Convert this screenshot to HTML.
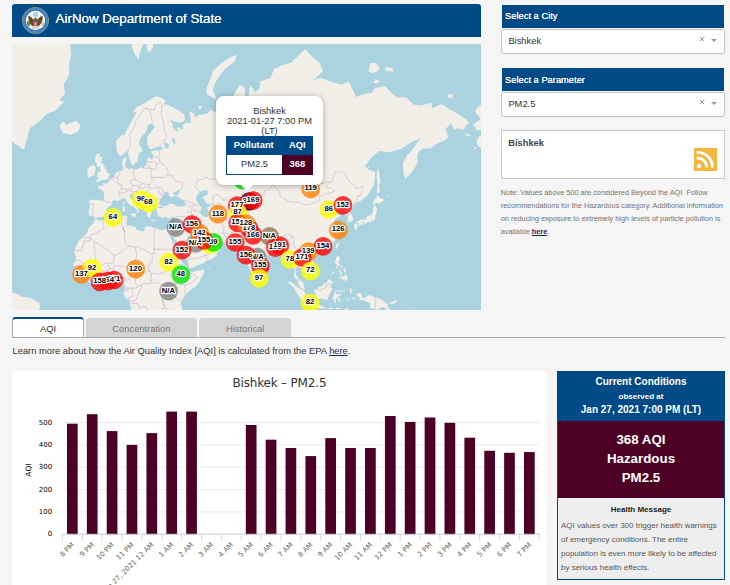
<!DOCTYPE html>
<html lang="en"><head><meta charset="utf-8"><title>AirNow Department of State</title>
<style>
*{box-sizing:border-box}
html,body{margin:0;padding:0}
body{width:730px;height:585px;overflow:hidden;background:#f5f5f5;font-family:"Liberation Sans",Arial,sans-serif;color:#333;position:relative}
.abs{position:absolute}
#hdr{left:12px;top:4px;width:469px;height:33px;background:#004b87;border-radius:3px 3px 0 0}
#hdr .t{position:absolute;left:43.6px;top:0;line-height:29px;font-size:13.33px;color:#fff;white-space:nowrap;text-shadow:0 0 .6px #fff}
#map{left:12px;top:44px;width:469px;height:266px;overflow:hidden;background:#aad3df}

.bar{left:501.5px;width:222.6px;height:23px;background:#004b87;color:#fff;font-size:9.33px;line-height:24px;padding-left:3.6px;white-space:nowrap;text-shadow:0 0 .5px #fff}
.sel{left:501px;width:224px;height:24.6px;background:#fff;border:1px solid #c4c4c4;border-radius:3px;font-size:9.33px;line-height:23.4px;padding-left:6.4px;color:#333}
.sel .x{position:absolute;left:197px;top:6.3px;width:6px;height:6px}
.sel .c{position:absolute;left:208.8px;top:8.8px;width:0;height:0;border-left:3px solid transparent;border-right:3px solid transparent;border-top:3.2px solid #999}
#city{left:501px;top:130.3px;width:224px;height:49.2px;background:#fff;border:1px solid #c9c9c9}
#city b{position:absolute;left:6.2px;top:5.6px;font-size:9.33px;letter-spacing:0;color:#444;line-height:12px}
#note{left:500.8px;top:186.1px;width:226px;font-size:7.33px;line-height:13.03px;color:#747474;white-space:nowrap}
#note b{color:#1b2a5a;text-decoration:underline}
.tab{top:318px;height:19px;background:#d4d4d4;border-radius:3.5px 3.5px 0 0;font-size:9.33px;color:#777;text-align:center;line-height:23px}
#tabA{left:12px;top:317px;width:72px;height:20px;background:#fff;border:1px solid #aaa;border-top:2px solid #004b87;border-bottom:0;border-radius:3.5px 3.5px 0 0;color:#333;line-height:20px}
#tline{left:12px;top:336.8px;width:713px;height:1px;background:#a9a9a9}
#learn{left:12.5px;top:345px;font-size:9.33px;line-height:12px;white-space:nowrap;color:#333}
#learn u{color:#1b2a5a;font-weight:normal}
#chart{left:12px;top:371px;width:534px;height:214px;background:#fff;overflow:hidden}
#cc{left:557px;top:370.8px;width:168px;height:209px;border:1px solid #004b87;border-top:0;background:#eee}
#cc .h{position:absolute;left:-1px;top:0;width:168px;height:50.2px;background:#004b87;color:#fff;text-align:center;font-weight:bold}
#cc .h div{position:absolute;left:0;width:100%;white-space:nowrap}
#cc .m{position:absolute;left:0;top:50.2px;width:166px;height:76.7px;background:#4c0026;color:#fff;text-align:center;font-weight:bold;font-size:13.33px}
#cc .m div{position:absolute;left:0;width:100%;line-height:16px}
#cc .hm{position:absolute;left:0;top:134px;width:166px;text-align:center;font-weight:bold;font-size:8px;line-height:10px;color:#222}
#cc .tx{position:absolute;left:3px;top:148.6px;font-size:8px;line-height:14px;color:#555;white-space:nowrap}
</style></head><body>
<div id="hdr" class="abs"><svg class="abs" style="left:10px;top:2.9px" width="27" height="27" viewBox="0 0 27 27">
<circle cx="13.5" cy="13.5" r="13.1" fill="#3573b9" stroke="#b9ba62" stroke-width=".7"/>
<circle cx="13.5" cy="13.5" r="11.3" fill="none" stroke="#6f9fd4" stroke-width="1.6" stroke-dasharray="1.1 .9" opacity=".75"/>
<circle cx="13.5" cy="13.5" r="9.7" fill="#fdfdfd"/>
<circle cx="13.5" cy="7.4" r="2.7" fill="#a9d3e6"/>
<path d="M7.6 7.3l1.6 1.5M19.4 7.3l-1.6 1.5" stroke="#c9c25e" stroke-width="1"/>
<path d="M6.5 8.8C8.3 9.2 10 10.6 11.2 12.6L12.4 11.6 13.5 10.6 14.6 11.6 15.8 12.6C17 10.6 18.7 9.2 20.5 8.8 21.1 11.6 20.3 15.6 17.3 18.6L15.6 19.4H11.400000000000001L9.7 18.600000000000001C6.7 15.6 5.9 11.6 6.5 8.8Z" fill="#68481f"/>
<path d="M10.3 19h6.4l1 2.4-2.300000000000001.6-1.9.5-1.9-.5-2.3-.6z" fill="#d9d9d6"/>
<path d="M11.7 13.6h3.6v3.3c0 1.2-.8 2-1.8 2.4-1-.4-1.8-1.2-1.8-2.400000000000001z" fill="#ee7d84"/>
<path d="M11.7 13.4h3.6v1.8h-3.6z" fill="#3b5ea8"/>
<path d="M12.5 12.4a1.1 1.1 0 0 1 2 0l-.3 1h-1.4z" fill="#7a5a2a"/>
<ellipse cx="6.5" cy="16.600000000000001" rx="1.5" ry="2.6" transform="rotate(-20 6.5 16.6)" fill="#3f8f45"/>
<ellipse cx="20.400000000000002" cy="16.8" rx="1.2" ry="2.3" transform="rotate(20 20.4 16.8)" fill="#c4c4c0"/>
</svg><div class="t">AirNow Department of State</div></div>
<div id="map" class="abs"><svg width="469" height="266" viewBox="0 0 469 266" style="position:absolute;left:0;top:0"><rect width="469" height="266" fill="#aad3df"/><path d="M117.9 275.3L120.4 271.9L120.8 268.8L119.3 265.5L117.9 259.8L117.0 257.3L113.2 253.1L111.3 249.6L112.4 247.5L113.2 244.5L112.8 241.1L110.7 239.9L107.8 240.1L105.9 240.1L104.0 237.8L101.0 236.1L97.5 236.5L94.5 237.2L90.7 239.1L86.9 238.6L83.1 238.8L80.2 239.9L75.4 237.2L72.6 235.1L69.3 232.2L68.4 230.1L65.9 227.2L62.7 224.7L62.7 222.3L61.1 220.0L63.1 217.4L64.0 213.4L63.1 210.6L62.1 207.8L62.1 206.7L64.2 201.8L66.9 196.7L69.9 192.9L73.3 190.9L76.0 187.4L75.8 185.0L80.0 180.2L81.5 179.3L83.3 175.1L84.4 174.9L86.9 176.5L88.8 176.3L90.7 176.8L93.4 175.1L97.0 173.5L100.2 172.8L104.0 172.5L107.8 172.3L113.2 171.6L115.5 172.3L114.7 173.7L114.9 175.1L115.1 177.7L113.8 179.6L115.8 181.2L119.7 181.8L123.5 183.0L125.0 185.7L130.7 187.7L132.8 186.1L132.6 183.6L135.9 181.8L138.5 182.5L142.2 184.1L146.0 185.0L149.8 186.3L151.5 185.7L153.6 185.0L156.1 185.4L158.5 185.9L159.7 185.4L161.2 182.1L162.7 178.2L162.7 175.6L162.7 174.0L163.3 172.5L161.8 173.3L160.4 172.8L157.4 174.4L156.4 174.4L153.0 172.5L151.3 174.2L148.2 173.0L146.5 172.3L144.8 168.9L145.6 167.2L144.2 166.2L144.4 165.0L145.4 164.0L144.2 163.5L142.2 162.7L141.0 162.7L140.1 163.5L139.9 165.0L138.1 163.5L138.1 166.0L138.9 167.2L140.2 169.9L138.3 170.1L138.9 171.3L138.1 173.7L136.2 173.0L134.9 170.4L135.5 169.2L134.0 167.7L132.6 165.7L131.5 163.7L131.7 161.2L130.9 159.9L129.0 158.4L125.4 156.0L123.5 154.5L122.1 152.1L121.8 151.2L121.0 152.6L120.4 150.7L120.2 150.2L118.1 151.0L117.9 153.4L120.2 155.8L121.6 158.9L125.2 160.2L126.7 162.2L129.8 164.7L129.2 165.5L126.9 164.0L126.1 166.0L127.1 167.5L124.8 169.9L124.4 170.1L124.2 169.4L125.4 167.7L124.2 165.0L122.7 163.5L121.6 163.0L119.3 161.7L117.6 160.2L115.8 158.9L114.5 157.4L114.1 156.0L113.2 154.5L111.5 153.7L109.2 155.3L107.1 156.6L105.7 157.1L104.0 156.6L102.1 156.3L100.4 157.1L100.6 158.9L98.7 161.5L96.0 163.2L93.9 166.2L94.9 168.2L93.0 170.9L90.3 173.0L86.1 173.0L83.8 174.7L82.5 173.5L81.2 171.8L77.5 172.3L76.6 168.2L77.5 164.5L77.9 162.0L76.8 157.6L79.4 155.5L83.6 156.0L87.3 156.3L91.1 156.6L92.2 153.1L92.2 150.2L92.2 148.8L89.7 145.7L86.3 144.3L85.4 142.6L88.8 141.7L91.5 142.0L90.9 138.8L94.1 139.7L94.7 139.4L97.4 137.6L97.9 135.2L100.8 134.0L102.3 131.9L103.6 128.7L105.9 127.5L109.7 126.8L111.3 125.9L110.5 122.6L109.9 120.6L110.7 115.1L114.7 113.0L114.1 117.2L113.2 120.6L113.4 122.9L115.1 124.6L117.6 125.2L120.2 123.9L121.8 125.9L125.0 124.9L129.4 122.9L130.1 124.2L132.0 124.2L132.6 122.6L134.7 119.9L134.5 117.2L135.7 114.0L137.6 113.0L139.3 115.4L140.4 115.4L141.0 112.6L141.2 110.4L139.3 109.3L139.3 107.1L141.8 106.8L145.0 106.4L147.9 106.8L149.8 104.9L152.3 104.9L149.8 103.7L148.8 102.2L145.0 103.0L142.2 104.1L138.3 105.2L136.8 103.0L135.3 100.2L135.1 96.6L135.7 92.1L138.3 89.1L141.2 85.1L142.9 83.8L141.4 80.6L139.3 80.1L137.0 80.1L135.5 82.4L134.9 85.1L133.2 89.1L130.7 91.2L128.6 94.2L127.3 97.8L127.3 101.8L129.8 103.7L130.5 107.1L126.9 109.3L126.3 111.9L125.9 115.4L125.0 118.2L122.7 118.9L121.6 120.9L119.3 120.9L118.7 118.9L118.1 115.8L117.2 113.0L115.7 108.6L114.7 107.1L114.9 104.9L113.6 108.2L109.7 111.5L107.8 111.9L105.2 108.6L104.4 103.0L104.2 97.0L106.1 94.6L110.7 90.8L113.6 90.4L113.0 89.1L115.5 84.2L118.5 79.2L121.9 72.9L125.0 67.4L121.2 68.4L119.3 69.9L122.3 66.3L125.2 62.6L130.5 60.5L135.5 57.1L139.7 54.8L143.7 52.5L147.9 53.1L153.8 56.5L151.7 59.9L155.5 60.5L158.4 62.6L161.4 63.2L167.9 67.4L172.6 71.0L173.0 75.9L168.8 78.7L163.1 77.8L158.4 75.9L156.3 73.9L160.3 79.2L160.8 83.8L164.1 86.9L166.9 88.7L164.6 84.2L165.0 83.3L171.7 85.6L170.4 81.5L174.6 78.3L178.4 79.2L178.9 75.4L177.0 66.9L182.2 69.4L183.1 73.4L186.9 71.0L195.5 69.4L198.4 65.8L204.1 67.9L209.8 64.8L210.2 60.5L216.5 63.2L223.2 66.9L225.1 64.2L221.8 58.8L222.2 50.1L227.9 40.7L232.7 43.9L233.3 53.1L232.9 64.2L231.7 74.4L230.8 76.8L234.6 75.4L235.5 66.9L235.5 56.0L237.4 47.1L238.4 41.4L243.2 48.3L247.9 43.9L247.9 37.4L258.4 34.0L262.2 24.7L271.8 20.8L279.4 18.5L287.0 11.1L293.3 5.0L298.4 11.1L308.0 19.3L310.8 26.9L304.2 34.0L297.5 37.4L308.0 34.0L319.4 37.4L328.9 40.7L336.6 37.4L341.3 47.1L344.2 53.1L351.8 50.1L359.4 48.9L363.2 43.9L372.8 42.0L380.4 50.1L386.1 53.7L393.7 53.1L401.4 60.5L409.0 61.5L419.5 58.8L420.4 64.2L430.0 59.9L437.6 65.3L447.1 70.5L453.8 74.9L457.0 78.7L454.7 81.1L450.9 86.0L446.2 84.2L442.0 85.6L440.1 81.1L438.2 79.2L435.7 82.9L433.4 85.1L434.7 87.4L436.2 93.3L433.8 95.8L423.3 100.6L418.5 104.5L410.9 104.5L406.1 108.2L405.2 112.6L405.6 118.2L403.3 122.9L399.5 128.7L393.2 134.9L391.5 128.7L390.9 118.9L394.7 111.9L401.4 104.5L406.1 97.4L409.0 94.6L400.4 97.4L389.9 104.5L382.3 107.1L376.6 108.2L367.1 107.1L359.4 113.7L352.8 122.3L356.6 125.5L363.2 127.8L362.9 133.4L361.9 140.9L358.5 146.6L355.1 152.1L349.0 156.8L346.1 157.6L343.6 159.2L341.7 161.2L338.1 165.2L337.5 167.2L339.6 169.9L341.3 174.7L340.6 176.8L337.5 178.2L335.2 178.4L335.8 174.7L335.8 171.1L332.8 170.4L333.1 168.2L331.8 165.7L327.0 167.5L326.1 167.7L327.0 163.7L325.5 162.7L322.5 165.2L319.0 167.5L320.4 169.9L321.3 171.1L325.1 170.6L328.2 171.3L327.8 172.5L323.8 174.7L321.9 177.5L324.7 181.6L326.8 184.5L326.1 186.5L324.7 187.9L327.0 188.3L325.7 192.7L322.6 197.0L319.8 200.1L316.9 202.6L312.2 204.7L308.0 205.7L305.1 206.3L304.2 208.8L303.2 206.3L300.9 206.1L298.1 207.8L296.0 211.4L297.5 214.4L300.7 217.2L302.6 221.3L302.8 225.3L299.4 228.2L297.3 230.5L294.2 231.8L294.6 229.1L293.3 228.4L290.8 227.2L288.9 224.3L286.6 222.5L285.7 222.3L285.1 224.3L284.1 227.2L284.0 230.7L285.5 232.4L286.2 234.9L289.1 236.5L291.4 238.8L291.6 241.1L292.7 244.5L292.9 245.8L291.8 245.8L288.5 243.5L287.6 242.6L286.2 240.3L285.7 238.0L285.3 235.9L282.1 233.0L282.2 230.1L282.6 227.2L281.9 223.3L280.7 219.4L280.3 216.4L277.9 215.8L276.0 217.8L274.2 217.4L274.6 214.4L273.1 211.4L271.6 209.2L269.9 206.3L269.5 204.7L267.0 204.3L265.1 205.7L262.2 206.1L260.3 206.3L259.8 208.8L258.0 209.8L254.8 212.8L253.3 214.0L249.5 216.8L248.7 217.8L247.2 219.4L247.6 223.1L246.6 227.2L246.8 228.6L245.1 230.5L242.2 232.8L239.9 230.1L239.7 229.1L237.8 225.3L237.1 223.5L235.2 218.6L234.2 215.4L233.3 211.4L233.3 208.0L232.7 205.9L232.5 204.7L229.8 207.3L229.6 208.0L226.0 204.9L228.5 203.4L226.4 203.7L224.7 202.0L222.2 199.5L220.9 198.2L217.4 198.6L213.2 198.9L210.0 198.4L205.0 197.8L203.1 195.7L201.8 194.6L199.1 195.7L193.6 193.1L191.3 190.7L189.4 188.3L186.9 187.4L186.9 188.5L185.8 189.6L187.3 192.7L190.0 195.9L190.9 198.4L192.7 197.2L192.3 196.7L192.8 199.7L194.6 200.7L198.2 200.1L199.9 198.4L202.0 196.3L202.0 199.1L204.1 201.2L206.2 202.0L208.5 204.3L206.8 207.3L205.0 208.6L204.7 211.4L202.0 213.4L198.9 215.4L194.6 216.4L191.7 219.0L188.1 220.4L184.1 222.3L180.3 223.7L177.4 224.1L177.0 222.7L176.3 219.8L175.9 216.4L174.2 213.8L172.6 210.4L169.2 206.3L166.9 201.2L164.1 196.5L161.2 192.7L161.2 189.4L159.9 193.1L156.4 188.5L158.2 192.7L158.9 194.4L161.0 199.1L162.4 203.2L164.8 205.3L165.4 210.2L167.9 213.4L169.8 218.2L172.3 220.4L175.9 223.3L176.6 226.0L179.3 228.2L185.0 226.6L188.8 226.2L192.1 225.5L192.1 228.4L189.8 233.0L187.3 237.8L183.7 242.6L180.8 244.5L175.9 248.3L173.6 251.5L170.9 254.4L170.2 256.1L168.5 259.8L169.4 261.3L170.0 265.5L171.5 268.4L171.9 272.3L172.1 275.3ZM-3.8 240.7L-1.8 244.5L-0.8 246.4L-0.8 248.3L3.0 249.6L5.9 250.2L10.1 252.7L14.8 253.6L18.3 253.8L21.1 255.4L25.9 258.0L27.0 258.2L28.2 261.9L28.0 263.6L25.9 267.5L24.0 269.4L21.1 273.3L18.3 287.2L-19.9 287.2L-19.9 238.8ZM83.6 137.6L86.5 134.3L88.4 133.7L84.8 133.1L85.9 129.1L85.7 127.8L88.8 127.5L88.4 124.9L87.6 122.6L85.0 122.9L85.0 119.6L82.9 117.2L83.3 113.3L85.0 109.7L88.6 109.7L86.9 113.0L90.7 113.0L89.2 117.5L88.4 118.9L90.7 119.6L93.2 123.9L94.7 126.8L95.1 129.1L97.2 129.1L97.7 130.3L96.8 132.5L95.8 133.7L97.2 134.0L96.2 135.2L92.6 135.8L89.9 136.1L87.6 137.0L85.0 137.9ZM76.0 133.4L75.1 131.3L75.6 127.8L75.4 124.9L79.3 121.6L82.7 121.6L84.0 124.2L82.9 127.8L82.3 131.3L78.7 132.5ZM58.3 90.8L51.2 89.1L48.8 84.7L47.8 81.5L51.6 77.3L54.5 81.1L59.2 78.7L64.0 76.8L68.6 81.5L66.9 86.5L63.1 89.1ZM10.8 105.2L6.8 101.8L3.0 100.6L-0.2 96.6L-4.0 87.4L-10.3 58.8L-10.3 -42.2L62.1 -42.2L62.1 -17.7L58.3 0.4L59.2 11.1L57.3 19.3L57.3 30.5L51.6 40.7L52.9 50.1L46.9 56.0L52.0 57.7L43.0 66.9L35.4 69.4L26.8 77.8L22.8 81.1L18.3 83.8L15.4 92.5L13.3 100.6L12.5 104.5ZM126.3 15.3L123.1 11.1L121.2 6.8L119.8 2.3L119.3 -0.5L115.5 -17.7L131.7 -17.7L131.3 -0.5L129.8 4.1L128.0 7.7L127.5 11.1ZM134.5 -0.5L134.5 -17.7L142.2 -17.7L141.2 -0.5L140.8 3.2L138.3 7.7L137.4 8.5L135.1 5.9ZM204.1 55.4L194.6 50.1L194.6 43.9L197.4 37.4L201.2 26.9L208.9 19.3L220.3 11.9L225.1 11.1L222.2 17.7L212.7 25.4L206.0 34.0L202.2 40.7L200.9 47.1L204.1 54.2ZM356.6 26.9L358.5 18.5L364.2 19.3L368.0 24.7L363.2 28.4L359.4 29.1ZM373.7 26.9L372.8 23.1L380.4 23.9L381.4 27.6ZM361.3 38.8L363.2 35.4L367.6 36.8L366.1 39.4ZM435.3 53.7L436.6 50.1L441.4 50.7L440.4 53.7ZM365.2 149.6L367.8 147.7L366.9 140.9L368.8 137.9L368.0 134.9L367.4 130.3L366.5 124.6L365.0 127.2L364.6 131.9L365.3 137.9L365.5 143.7L365.0 147.4ZM361.3 161.2L361.0 158.4L362.1 156.6L364.6 153.4L365.0 150.7L368.0 153.9L371.3 154.7L372.2 156.6L369.5 157.6L367.4 159.9L364.6 158.4L363.1 159.2L362.7 160.5ZM363.6 161.5L364.4 163.7L365.2 166.2L364.2 169.2L363.2 172.3L362.9 175.4L361.1 177.0L360.6 176.3L359.2 177.9L355.6 177.9L355.4 178.6L353.3 180.5L352.0 178.6L352.2 177.7L349.0 178.4L346.1 179.3L344.2 179.3L344.8 178.4L347.4 176.1L350.5 175.6L353.3 175.4L354.7 173.5L356.0 171.3L356.0 172.3L358.9 171.1L359.8 169.9L361.1 167.5L361.0 165.0L361.5 163.0L362.1 162.0ZM344.0 179.6L342.9 180.2L341.7 181.2L341.9 182.3L342.7 183.4L342.9 185.7L343.6 186.1L344.8 185.2L345.9 182.3L345.5 180.5ZM349.9 178.6L351.2 179.8L350.3 180.9L349.0 180.5L347.6 182.1L346.7 180.7L347.6 179.3L349.0 178.9ZM326.3 198.4L326.8 200.1L325.7 203.2L324.7 205.3L323.6 203.9L324.0 201.2L325.1 199.1ZM305.1 209.2L306.1 210.4L303.8 212.8L301.7 212.4L301.9 210.4L303.4 209.4ZM324.7 212.2L327.4 212.4L328.0 215.4L326.5 217.4L326.5 219.8L328.0 221.3L330.5 221.7L331.0 223.9L329.5 223.3L328.0 221.9L325.1 221.9L324.4 220.4L323.2 218.4L323.0 216.6L323.8 215.8L324.2 213.4ZM333.7 229.5L335.4 233.0L335.0 235.9L333.5 237.6L332.9 236.7L333.9 234.9L331.2 236.8L330.8 234.9L328.9 233.6L327.0 235.1L327.6 233.0L329.7 231.8L331.2 232.6L332.8 231.1ZM331.4 224.3L333.3 224.3L334.1 227.0L333.1 228.8L332.2 228.6L331.6 226.6ZM329.3 227.2L330.1 228.2L329.3 230.9L328.0 230.1L328.4 228.2ZM327.0 225.5L329.1 226.4L327.4 228.2L326.8 228.2ZM324.0 222.3L325.9 222.5L325.9 224.7L324.9 224.7ZM322.1 226.4L322.8 228.2L318.6 231.8L317.9 232.2L319.4 230.1L321.7 227.2ZM317.1 234.9L315.8 236.8L314.1 238.8L311.8 239.7L309.9 242.6L306.8 243.0L304.7 245.3L303.4 244.7L302.1 246.6L302.6 248.3L304.2 251.2L304.7 254.0L307.6 254.8L310.8 254.8L312.9 256.1L315.4 255.5L316.5 253.1L317.1 250.8L318.5 248.3L319.2 246.6L321.1 246.2L319.2 244.1L318.3 242.0L319.2 240.3L320.4 238.9L321.7 238.2L319.6 237.0L317.9 235.3ZM276.1 237.6L280.3 238.4L282.4 240.7L285.7 243.0L288.5 245.1L292.2 247.3L293.5 250.2L296.3 252.7L296.7 255.0L296.2 259.6L293.9 258.8L289.5 255.9L286.6 252.1L285.9 250.2L283.6 247.3L282.8 245.1L279.2 241.2L276.5 239.3ZM296.5 259.6L298.1 259.8L300.9 260.1L302.1 261.3L304.9 261.5L305.9 260.5L309.1 261.5L311.8 263.0L312.7 264.9L308.9 264.2L305.1 263.6L302.3 263.0L299.4 263.2L297.5 261.7L295.2 261.3ZM312.7 263.8L315.0 264.0L314.1 265.1ZM315.6 264.2L316.9 264.2L316.5 265.3L315.4 265.1ZM317.1 264.0L319.4 263.8L321.3 264.4L320.9 265.3L317.5 265.5ZM323.0 264.2L326.1 263.8L328.9 264.0L328.6 265.1L324.2 265.3ZM321.3 266.3L324.7 266.7L324.2 268.0L321.5 267.1ZM337.1 264.2L335.6 265.5L329.9 268.2L330.8 266.7L334.3 264.6ZM332.9 245.6L330.8 246.6L327.0 246.8L324.7 246.4L323.2 247.3L322.8 248.3L322.1 250.2L321.1 253.1L321.1 255.0L322.3 255.9L322.1 258.8L324.0 259.0L324.0 256.9L323.8 254.0L325.1 253.4L326.1 255.9L326.7 257.5L328.4 256.9L328.2 258.8L328.7 255.9L327.6 254.4L326.1 252.1L328.0 251.7L329.5 250.2L329.7 249.8L327.0 250.0L325.1 250.8L323.6 249.6L324.2 247.5L326.1 247.3L328.9 247.5L331.4 247.5L332.8 246.4ZM338.3 244.1L339.8 245.4L339.8 247.3L339.0 249.8L337.9 248.9L337.7 246.8L337.5 245.8ZM338.8 253.6L341.3 253.8L343.8 254.8L343.8 255.5L339.8 254.8ZM334.8 254.2L336.8 254.2L336.6 255.5L335.0 255.4ZM344.6 250.0L347.0 249.1L349.0 249.6L349.9 252.7L351.8 254.6L353.7 253.1L355.6 251.5L358.5 251.2L361.3 252.7L363.2 253.3L367.1 254.6L370.3 255.9L372.4 258.2L375.6 259.8L376.2 261.1L375.1 262.6L377.2 264.6L379.4 266.5L381.7 268.0L380.4 268.6L377.5 267.8L374.9 266.5L372.4 263.6L369.9 263.0L367.6 264.6L366.1 265.9L363.2 265.7L359.4 264.0L357.1 264.2L358.7 261.7L357.5 258.8L354.7 257.5L350.9 256.3L348.0 255.9L347.0 254.0L348.4 253.1L346.1 252.5L344.2 251.2ZM377.4 258.8L383.3 256.3L384.8 256.5L384.2 258.8L380.4 260.3L378.5 260.1ZM381.9 253.3L384.2 254.8L386.1 257.3L385.5 256.5L382.9 254.4ZM389.4 258.6L390.3 260.1L391.6 261.3L390.3 260.7ZM392.8 261.1L394.7 262.4L394.3 262.8ZM397.0 262.6L399.1 264.6L397.9 264.2ZM398.7 266.1L400.6 266.7L400.4 267.3L398.9 266.9ZM400.8 264.4L401.9 266.1L402.1 266.7L400.8 265.1ZM247.0 229.5L249.3 232.0L250.4 234.9L247.9 236.8L247.2 236.8L246.6 234.9L246.6 232.0ZM124.2 169.4L123.7 172.3L123.3 173.0L120.2 172.1L118.3 170.4L119.8 169.4ZM112.2 162.0L113.0 165.0L112.6 167.2L110.9 167.7L110.5 165.0L110.1 162.7ZM112.4 157.4L112.6 159.9L112.0 161.5L110.9 159.9L111.3 158.4ZM139.5 175.6L144.6 176.3L142.2 177.0L139.3 176.5ZM160.3 175.6L159.1 176.8L157.4 177.9L156.1 176.8L157.4 176.3ZM100.4 165.2L100.8 166.5L99.5 166.5L99.1 165.7ZM196.3 223.9L198.4 224.1L197.4 224.7L196.1 224.5ZM63.6 191.4L62.7 192.7L62.3 192.0ZM65.0 192.2L64.8 193.1L64.4 192.7ZM68.8 190.1L67.2 192.5L68.2 191.2ZM186.6 61.5L190.2 62.6L189.0 65.3L186.9 65.3ZM453.4 89.1L458.9 91.2L457.0 92.5L453.8 91.2ZM464.3 64.8L463.3 67.9L468.5 74.4L467.1 76.4L462.7 79.2L460.3 81.1L463.3 82.4L463.9 86.0L473.8 86.0L473.8 90.4L467.1 92.5L464.3 97.4L466.2 102.6L471.9 105.2L479.5 108.2L485.2 47.1ZM463.3 103.0L464.8 104.5L463.7 105.2L461.8 104.5ZM378.1 150.7L375.6 152.1L374.7 153.4L375.8 153.1ZM373.3 153.7L371.8 155.3L372.8 154.7ZM381.4 148.8L379.8 150.2L380.8 149.9ZM392.4 135.5L390.7 137.3L391.6 137.6ZM356.6 121.6L357.9 122.9L356.6 123.3ZM407.7 107.5L406.3 110.1L407.1 109.3Z" fill="#f2efe9"/><path d="M149.8 162.5L154.3 161.7L158.0 159.9L161.4 159.9L163.7 161.7L166.9 162.5L170.2 162.5L173.6 161.2L173.8 159.4L172.6 157.4L170.2 155.8L166.5 153.1L164.3 151.5L162.0 152.1L159.3 153.7L158.2 153.1L156.4 151.2L157.4 149.3L155.5 148.8L154.5 147.7L153.0 148.0L151.1 150.7L149.2 154.2L147.9 156.8L146.9 158.7L147.9 160.2L149.0 161.7ZM164.3 151.2L162.2 151.0L161.2 149.1L163.1 147.4L166.2 146.3L168.8 146.0L167.5 147.4L166.9 149.3L165.8 151.0ZM145.4 164.0L146.9 162.5L149.8 162.5L151.3 163.2L149.6 164.0L146.9 164.0ZM186.9 149.3L188.8 147.4L192.7 146.3L195.5 146.8L195.9 150.7L192.7 152.1L190.4 153.1L192.1 155.8L194.6 158.7L194.6 160.7L195.5 162.5L195.5 165.0L196.9 167.5L197.4 171.1L195.5 172.8L192.7 173.0L189.8 171.3L187.7 168.9L188.3 166.7L189.4 164.2L190.4 164.0L188.3 162.5L186.6 159.9L185.0 157.4L184.1 153.9L185.0 151.2ZM195.3 160.2L198.0 161.0L198.6 162.5L196.7 163.2L195.3 162.0ZM152.3 98.2L156.4 99.8L156.8 103.3L154.0 104.9L152.6 102.2ZM160.8 93.3L162.7 95.4L163.7 98.6L162.2 101.0L161.2 98.2L159.9 95.8ZM155.9 247.7L159.1 247.5L159.5 250.2L158.9 252.7L155.5 253.3L154.9 250.2ZM150.2 254.8L151.5 257.8L152.8 261.7L153.8 264.9L151.7 261.7L150.3 257.8ZM175.5 167.7L177.6 167.7L177.2 168.9L175.5 168.9ZM180.5 169.4L181.8 170.4L181.4 172.1L180.5 171.1Z" fill="#aad3df"/><path d="M142.2 184.8L142.2 205.3L142.2 209.4L140.2 209.4L140.2 210.4L125.0 202.2L123.1 203.2L117.4 202.2L113.9 200.1L112.6 195.9L112.6 187.9L110.7 183.9M142.2 205.3L164.8 205.3M116.4 181.2L110.7 183.9L112.6 187.9L110.3 182.7L109.0 178.2L110.9 172.5M117.4 202.2L105.6 210.4L102.5 211.2L100.6 210.4L96.8 206.9L85.4 199.1L77.9 194.2M77.9 193.3L79.3 190.5L84.0 189.4L92.2 183.9L90.3 176.8M69.3 193.3L77.9 193.3L77.9 197.0L71.6 197.0L71.6 202.2L69.7 202.4L69.7 206.7L62.1 206.7M85.4 199.1L81.9 199.1L84.0 218.4L76.6 218.6L74.1 218.6L71.2 219.8L69.7 218.4L66.9 216.2L63.4 216.4M71.2 219.8L72.8 224.5L68.4 223.9L62.7 224.7M62.9 222.1L65.9 221.7L68.2 222.5L65.9 223.1L62.7 223.1M72.8 224.5L78.7 228.0L79.3 228.8L79.8 232.0L78.5 234.0L72.8 235.1M72.8 224.5L68.4 227.2L69.2 229.3L69.3 231.1M69.7 229.1L74.1 229.1L74.9 232.0L78.5 234.0L80.2 239.9M79.3 228.8L84.0 228.4L89.2 229.9L88.6 238.6M84.0 228.4L84.4 224.3L86.5 222.7L92.6 219.2L96.4 219.4L101.2 218.8L102.5 211.2M89.2 229.9L89.0 227.2L94.5 227.2L96.2 227.0L96.8 236.5M94.5 227.2L98.7 224.3L101.4 225.8L99.8 231.1L99.6 236.1M96.2 227.0L97.2 229.1L97.5 231.1L97.5 236.5M98.7 224.3L96.4 222.3L96.4 219.4M101.4 225.8L102.5 221.7L107.8 221.9L113.6 222.9L120.4 222.1L120.2 220.6L124.0 216.4L124.6 209.4L123.1 203.2M120.4 222.1L121.6 224.3L120.8 227.2L118.9 231.1L116.2 235.9L113.0 235.9L110.9 239.5M121.6 224.3L122.1 223.5L124.0 229.1L123.9 233.0L124.0 234.0L123.1 238.8L125.4 241.4L125.2 244.1L119.8 244.1L116.2 244.1L113.2 243.9M112.4 246.4L116.0 246.4L116.2 244.1M119.8 244.1L121.2 252.7L116.8 252.9L115.8 255.7M125.4 241.4L129.8 241.6L131.7 238.8L137.2 240.1L139.1 238.8L146.7 238.8L148.6 240.3L153.2 241.6M139.1 238.8L139.3 231.7L138.1 227.2L136.4 223.3L138.3 218.0L140.2 218.0L140.2 210.4M124.0 234.0L123.1 229.3L130.7 228.6L138.1 227.2M139.3 231.7L140.2 229.1L146.0 230.1L150.7 229.1L157.4 225.3L159.9 228.2L158.4 232.0L161.2 235.5L163.1 239.5L159.3 240.3L153.2 241.6L154.0 243.9L151.3 246.0L150.9 250.2L149.8 253.6L150.5 256.7M159.9 228.2L163.1 224.3L164.1 220.8L165.0 215.4L168.1 213.4M164.1 220.8L167.9 220.2L170.7 220.6L175.3 224.3M175.3 224.3L174.2 227.2L176.5 227.2L176.1 228.2L186.0 233.0L180.3 238.8L174.6 240.7L172.6 240.7L173.6 251.5M176.8 226.2L176.5 227.2M163.1 239.5L172.6 240.7M159.3 240.3L160.3 246.4L159.3 250.2L169.2 257.3M159.3 250.2L152.6 250.2L149.8 253.6M152.6 250.2L153.2 252.9L150.5 256.7M150.5 256.7L153.2 264.0L157.2 266.3L161.0 270.6L166.0 270.4L171.5 268.4M153.2 264.0L149.6 264.6L149.8 271.3L151.3 274.1L140.2 269.4L140.2 273.3L136.4 273.3M117.0 257.3L117.8 257.8L117.8 259.4M119.3 259.4L126.1 259.6L126.9 263.6L133.6 262.3L137.0 269.4L136.4 273.3M115.8 255.7L122.1 257.8L123.7 256.5L125.4 252.1L129.0 244.1L129.8 241.6M77.5 160.2L81.9 160.2L81.3 162.5L80.2 165.7L81.2 167.5L81.2 169.4L80.4 171.8M91.1 156.3L95.8 158.1L100.6 158.9M99.3 134.6L102.5 137.0L105.6 139.4L110.1 140.9L109.0 144.9L106.1 148.8L107.8 149.6L107.8 153.9L108.8 155.3M107.8 149.6L110.5 148.0L111.7 149.9L114.3 148.0L114.5 146.8L117.8 146.6L120.6 147.7M109.0 144.9L112.8 144.9L119.3 145.2L120.8 141.4L126.7 142.0L127.1 143.7L125.2 146.8L122.3 148.0L120.6 147.7L120.8 150.4M112.8 144.9L114.5 146.8M108.2 128.1L105.9 132.5L105.9 135.5L106.1 137.6L105.6 139.4M101.0 133.7L105.6 134.0L105.9 135.5M110.9 122.6L113.4 122.9M121.8 125.9L121.4 129.4L123.1 134.9L122.7 135.2L117.6 137.0L120.8 141.4M122.7 135.2L125.9 137.0L130.5 139.4L132.6 140.0L137.6 140.6L140.2 136.7L139.5 133.4L138.7 130.9L139.3 125.9L138.0 124.2L132.0 124.2M130.5 139.4L126.7 142.0M138.0 124.2L143.1 125.5L145.2 119.9L142.2 118.2L134.5 117.5M138.0 124.2L137.6 121.9L134.9 121.3M140.8 112.3L146.7 113.7L147.9 106.8M146.7 113.7L148.2 118.2L145.2 119.9M148.2 118.2L153.6 122.3L156.4 128.1L155.1 131.6L152.6 133.4L139.5 133.4M155.1 131.6L159.3 130.9L163.1 137.0L170.7 138.5L170.4 143.7L167.3 146.3M138.3 143.7L142.2 144.3L145.4 142.9L148.2 150.7L151.1 151.5M145.4 142.9L149.4 143.7L151.7 148.0L148.2 150.7M127.1 143.7L130.3 144.3L134.5 142.3L136.8 142.6L138.1 144.0L133.2 149.1L130.3 149.6L125.9 148.0L125.2 146.8M137.6 140.6L136.8 142.6M133.2 149.1L135.3 152.6L137.4 153.1L138.1 155.3L143.3 155.5L146.5 154.5L149.0 155.5M137.8 154.2L137.2 159.2L138.3 161.7L142.2 161.0L144.8 161.7L146.0 159.9L147.9 159.9M144.8 161.7L144.1 163.2M132.6 165.7L134.5 163.0L137.8 162.2L138.3 161.7M120.4 150.7L123.7 150.7L125.9 148.0M130.3 149.6L130.7 152.3L130.7 151.8L131.1 156.0L129.6 158.4L125.4 154.2L124.6 151.5L130.7 151.8M131.5 159.9L132.6 158.7L133.8 160.2L134.3 162.7L132.6 165.7M131.1 156.0L133.2 157.9L135.7 159.2L137.2 159.2M115.8 108.2L118.5 100.6L117.6 90.4L122.1 83.8L124.0 76.8L128.8 69.4L133.6 63.7L138.3 67.9L139.7 74.4L140.4 80.1M133.6 63.7L142.2 66.3L144.1 60.5L147.9 58.2L149.8 61.5L149.8 63.2L153.2 59.9M149.8 63.2L148.8 69.4L151.7 79.2L152.6 88.2L154.5 92.9L149.8 100.6L147.5 102.6M163.1 174.7L165.0 173.0L167.9 172.5L170.7 172.8L175.1 172.1L179.9 171.6L179.1 166.5L179.9 165.7L177.4 162.0L175.5 161.2L173.6 161.2M170.7 156.3L178.4 158.4L182.9 160.2L185.6 162.0L187.1 160.5M177.4 162.0L180.3 161.7L182.9 160.2M180.3 161.7L183.1 166.2L183.1 167.7M179.9 165.7L183.1 167.7L185.8 166.0L187.7 168.9M175.1 172.1L172.6 178.4L168.5 180.7L164.6 183.2L162.7 182.3M163.1 177.9L164.3 178.9L162.7 180.9L161.4 181.4M162.4 182.3L162.2 185.0L161.2 189.4M159.7 185.4L161.0 189.4M161.2 189.4L163.3 190.1L166.0 188.3L165.0 185.0L169.2 183.4L168.5 180.7M169.2 183.4L174.6 186.1L179.7 190.3L183.1 190.3L185.4 188.1M183.1 190.3L185.2 191.6L186.8 191.6M179.9 171.6L182.2 175.1L181.2 179.3L185.0 182.7L185.4 186.1L186.9 188.3M176.1 216.6L177.4 214.6L184.1 214.8L193.6 211.4L199.3 209.4L199.7 203.9L194.8 204.1L192.8 200.7M199.7 203.9L200.9 200.7L201.8 199.1M193.6 211.4L195.7 216.2M191.3 199.9L192.3 199.9M197.2 171.6L203.1 169.7L207.5 171.3L211.1 173.3L211.1 175.6L209.8 179.3L212.1 185.4L210.6 188.8L215.1 194.4L211.9 198.6M210.6 188.8L216.5 189.6L220.9 188.3L225.1 184.3L227.9 181.6L229.8 179.3L230.8 174.9L232.7 172.5L236.5 172.3M211.1 175.6L213.6 176.3L219.5 171.6L223.7 171.8L226.6 172.3L229.4 168.9L231.0 170.4L232.7 172.5M221.2 171.6L216.1 166.7L211.5 162.0L207.0 158.7L203.1 161.7L201.2 161.7L201.2 152.1L206.2 150.4L210.8 156.0L218.2 156.0L221.6 162.5L224.1 162.5L229.6 159.2M201.2 161.7L198.4 159.9L194.6 160.5M223.7 171.8L223.0 167.0L226.0 164.5L224.1 162.5M226.0 164.5L228.9 166.0L234.6 166.5L235.2 166.2M229.6 159.2L234.6 157.9L235.5 156.8L239.4 157.9L245.1 157.6L247.4 159.4M229.6 159.2L230.4 161.7L229.8 164.5L233.6 164.2L235.2 166.2M188.3 148.5L183.1 142.6L185.0 136.4L191.3 134.9L192.7 132.8L199.3 135.5L206.0 134.9L211.7 136.4L210.8 128.7L211.7 125.5L218.4 124.6L226.0 120.9L230.8 125.5L234.6 125.9L239.4 127.2L246.0 134.9L252.7 134.9L256.5 135.8L260.9 140.3M260.9 140.3L257.5 145.7L252.7 146.6L251.7 151.2L247.0 152.1L247.9 157.4L247.4 159.4L240.3 163.7L235.2 166.2L237.4 171.6L236.5 172.3M260.9 140.3L262.2 136.4L269.9 137.9L275.6 135.8L280.3 138.2L282.8 131.9L288.9 133.7L290.8 137.0L296.5 137.0L301.3 140.3L309.9 139.4L316.9 137.9L319.4 138.5L323.2 127.8L330.8 127.8L337.5 137.9L343.6 142.3L344.2 144.6L351.4 142.6L348.0 152.1L345.7 151.2L344.6 157.4L343.4 158.7M260.9 140.3L267.9 148.0L267.8 152.1L278.0 157.9L285.1 158.1L294.6 161.0L303.2 158.7L307.8 155.5L307.6 152.1L323.0 147.4L319.4 144.3L314.6 143.7L316.9 137.9M343.4 158.7L340.2 159.9L338.5 161.2L336.4 160.5L331.6 164.7M339.2 169.2L336.0 170.6M300.3 206.3L297.9 203.7L290.8 204.5L289.1 204.5L287.4 206.9L280.7 201.2L282.4 197.0L280.5 192.0L276.3 189.9L269.9 193.1L263.9 194.2L262.4 194.2L248.9 187.9L247.4 187.4L244.7 182.7L243.2 175.8L240.3 175.8L236.5 172.3M224.5 201.8L229.8 200.5L228.7 192.9L234.6 188.3L237.4 182.7L235.5 178.2L240.3 175.8M262.4 194.2L262.4 196.1L256.5 196.1L253.7 193.8L247.2 190.9L247.4 187.4M264.3 205.7L262.6 198.4L263.9 196.1L270.2 198.6L268.5 203.2L271.0 205.3L270.4 207.8M271.8 205.3L274.2 201.2L279.2 194.4L280.5 192.0M263.9 194.2L265.1 195.3L269.9 195.3L269.9 193.1M285.3 208.8L281.3 210.0L280.7 213.8L282.2 218.8L283.6 222.1L284.3 225.6L282.4 229.1M287.4 206.9L285.3 208.8L288.0 213.6L291.8 213.4L295.4 217.4L295.0 220.6L290.8 220.8L289.9 224.1L290.6 225.8M289.1 204.5L292.7 210.2L295.6 213.4L299.4 218.4L299.4 220.0L299.4 224.7L296.5 227.2L293.7 228.4M295.0 220.6L299.4 220.0M285.3 236.1L287.2 237.2L289.1 236.5M303.4 244.7L305.3 246.4L309.9 245.4L314.1 243.5L314.8 239.9L318.6 240.3M363.2 253.3L363.2 265.7M511.9 81.1L511.9 103.3" fill="none" stroke="#b79cc0" stroke-opacity=".7" stroke-width=".65" stroke-linejoin="round"/></svg><svg width="469" height="266" viewBox="12 44 469 266" style="position:absolute;left:0;top:0;font-family:'Liberation Sans',Arial,sans-serif"><circle cx="242.7" cy="180.1" r="9.35" fill="rgba(0,228,0,.8)"/><circle cx="81.6" cy="274.3" r="9.35" fill="rgba(255,126,0,.78)"/><circle cx="92.2" cy="268.1" r="9.35" fill="rgba(255,255,0,.82)"/><circle cx="114.1" cy="280.0" r="9.35" fill="rgba(255,0,0,.78)"/><circle cx="107.7" cy="281.0" r="9.35" fill="rgba(255,0,0,.78)"/><circle cx="99.9" cy="281.8" r="9.35" fill="rgba(255,0,0,.78)"/><circle cx="135.7" cy="269.1" r="9.35" fill="rgba(255,126,0,.78)"/><circle cx="113.1" cy="217.3" r="9.35" fill="rgba(255,255,0,.82)"/><circle cx="141.2" cy="199.5" r="9.35" fill="rgba(255,255,0,.82)"/><circle cx="148.5" cy="202.9" r="9.35" fill="rgba(255,255,0,.82)"/><circle cx="175.8" cy="227.7" r="9.35" fill="rgba(128,128,128,.78)"/><circle cx="192.1" cy="224.5" r="9.35" fill="rgba(255,0,0,.78)"/><circle cx="195.5" cy="243.3" r="9.35" fill="rgba(128,128,128,.78)"/><circle cx="199.6" cy="233.3" r="9.35" fill="rgba(255,126,0,.78)"/><circle cx="210.2" cy="244.6" r="9.35" fill="rgba(255,255,0,.82)"/><circle cx="213.4" cy="242.4" r="9.35" fill="rgba(0,228,0,.8)"/><circle cx="204.0" cy="240.5" r="9.35" fill="rgba(255,0,0,.78)"/><circle cx="182.0" cy="250.2" r="9.35" fill="rgba(255,0,0,.78)"/><circle cx="168.8" cy="262.1" r="9.35" fill="rgba(255,255,0,.82)"/><circle cx="181.0" cy="274.7" r="9.35" fill="rgba(0,228,0,.8)"/><circle cx="168.6" cy="291.2" r="9.35" fill="rgba(128,128,128,.78)"/><circle cx="218.1" cy="214.2" r="9.35" fill="rgba(255,126,0,.78)"/><circle cx="249.2" cy="201.5" r="9.35" fill="rgba(76,0,38,.85)"/><circle cx="253.2" cy="200.5" r="9.35" fill="rgba(255,0,0,.78)"/><circle cx="237.2" cy="205.6" r="9.35" fill="rgba(255,0,0,.78)"/><circle cx="237.8" cy="212.8" r="9.35" fill="rgba(255,255,0,.82)"/><circle cx="237.8" cy="223.0" r="9.35" fill="rgba(255,0,0,.78)"/><circle cx="249.1" cy="228.5" r="9.35" fill="rgba(255,0,0,.78)"/><circle cx="246.0" cy="223.6" r="9.35" fill="rgba(255,126,0,.78)"/><circle cx="253.2" cy="235.3" r="9.35" fill="rgba(255,0,0,.78)"/><circle cx="269.6" cy="236.3" r="9.35" fill="rgba(150,105,70,.75)"/><circle cx="235.2" cy="242.5" r="9.35" fill="rgba(255,0,0,.78)"/><circle cx="275.3" cy="247.6" r="9.35" fill="rgba(255,0,0,.78)"/><circle cx="279.8" cy="245.5" r="9.35" fill="rgba(255,0,0,.78)"/><circle cx="257.3" cy="257.2" r="9.35" fill="rgba(128,128,128,.78)"/><circle cx="246.0" cy="255.2" r="9.35" fill="rgba(255,0,0,.78)"/><circle cx="260.4" cy="266.0" r="9.35" fill="rgba(255,0,0,.78)"/><circle cx="259.3" cy="278.3" r="9.35" fill="rgba(255,255,0,.82)"/><circle cx="290.1" cy="259.3" r="9.35" fill="rgba(255,255,0,.82)"/><circle cx="308.4" cy="251.6" r="9.35" fill="rgba(255,126,0,.78)"/><circle cx="302.1" cy="257.5" r="9.35" fill="rgba(255,0,0,.78)"/><circle cx="310.4" cy="271.0" r="9.35" fill="rgba(255,255,0,.82)"/><circle cx="310.8" cy="189.0" r="9.35" fill="rgba(255,126,0,.78)"/><circle cx="323.0" cy="246.4" r="9.35" fill="rgba(255,0,0,.78)"/><circle cx="328.9" cy="209.5" r="9.35" fill="rgba(255,255,0,.82)"/><circle cx="342.9" cy="205.4" r="9.35" fill="rgba(255,0,0,.78)"/><circle cx="338.4" cy="230.0" r="9.35" fill="rgba(255,126,0,.78)"/><circle cx="310.2" cy="303.0" r="9.35" fill="rgba(255,255,0,.82)"/><g font-size="7.7" font-weight="bold" text-anchor="middle" fill="#000" stroke="#fff" stroke-width="2.3" stroke-linejoin="round" paint-order="stroke"><text x="81.4" y="275.7">137</text><text x="92.0" y="269.5">92</text><text x="113.9" y="281.4">171</text><text x="107.5" y="282.4">164</text><text x="99.7" y="283.2">158</text><text x="135.5" y="270.5">120</text><text x="112.9" y="218.7">64</text><text x="141.0" y="200.8">96</text><text x="148.3" y="204.2">68</text><text x="175.6" y="229.0">N/A</text><text x="191.9" y="225.8">156</text><text x="195.3" y="244.7">N/A</text><text x="199.4" y="234.7">142</text><text x="213.2" y="243.8">59</text><text x="203.8" y="241.8">155</text><text x="181.8" y="251.5">152</text><text x="168.6" y="263.5">82</text><text x="180.8" y="276.1">48</text><text x="168.4" y="292.6">N/A</text><text x="217.9" y="215.5">118</text><text x="249.0" y="202.8">368</text><text x="253.0" y="201.8">169</text><text x="237.0" y="206.9">177</text><text x="237.6" y="214.2">87</text><text x="237.6" y="224.3">151</text><text x="248.9" y="229.8">178</text><text x="245.8" y="224.9">128</text><text x="253.0" y="236.7">166</text><text x="269.4" y="237.7">N/A</text><text x="235.0" y="243.8">155</text><text x="275.1" y="248.9">153</text><text x="279.6" y="246.8">191</text><text x="257.1" y="258.6">N/A</text><text x="245.8" y="256.5">156</text><text x="260.2" y="267.4">155</text><text x="259.1" y="279.7">97</text><text x="289.9" y="260.7">78</text><text x="308.2" y="252.9">139</text><text x="301.9" y="258.9">171</text><text x="310.2" y="272.4">72</text><text x="310.6" y="190.3">119</text><text x="322.8" y="247.8">154</text><text x="328.7" y="210.8">86</text><text x="342.7" y="206.8">152</text><text x="338.2" y="231.3">126</text><text x="310.0" y="304.4">82</text></g></svg><div style="position:absolute;left:204px;top:51.5px;width:107px;height:89.6px;background:#fff;border-radius:8px;box-shadow:0 1px 6px rgba(0,0,0,.3)"></div>
<div style="position:absolute;left:229.1px;top:141px;width:0;height:0;border-left:6.4px solid transparent;border-right:6.4px solid transparent;border-top:6px solid #fff"></div>
<div style="position:absolute;left:204px;top:51.5px;width:107px;height:89.6px;font-size:9.33px;line-height:10.1px;text-align:center;color:#333;white-space:nowrap">
<div style="position:absolute;left:0;top:10.3px;width:107px">Bishkek<br>2021-01-27 7:00 PM<br>(LT)</div>
<div style="position:absolute;left:10px;top:40.6px;width:87.3px;height:19.3px;background:#004b87;color:#fff;font-weight:bold;line-height:18.6px"><span style="position:absolute;left:0;width:55.5px">Pollutant</span><span style="position:absolute;left:55.5px;width:31.8px">AQI</span></div>
<div style="position:absolute;left:10px;top:59.9px;width:56px;height:19.4px;border:1px solid #004b87;border-top:0;border-right:0;background:#fff;line-height:18px">PM2.5</div>
<div style="position:absolute;left:65.5px;top:59.9px;width:31.8px;height:19.4px;background:#4c0026;color:#fff;font-weight:bold;line-height:18px">368</div>
</div></div>
<div class="bar abs" style="top:5px;line-height:22.6px">Select a City</div>
<div class="sel abs" style="top:29px">Bishkek<svg class="x" viewBox="0 0 6 6"><path d="M.8 .8L5.2 5.2M5.2 .8L.8 5.2" stroke="#999" stroke-width="1" fill="none"/></svg><i class="c"></i></div>
<div class="bar abs" style="top:68px">Select a Parameter</div>
<div class="sel abs" style="top:92px">PM2.5<svg class="x" viewBox="0 0 6 6"><path d="M.8 .8L5.2 5.2M5.2 .8L.8 5.2" stroke="#999" stroke-width="1" fill="none"/></svg><i class="c"></i></div>
<div id="city" class="abs"><b>Bishkek</b><svg class="abs" style="left:191.5px;top:16.8px" width="23" height="23" viewBox="0 0 23 23">
<rect width="23" height="23" fill="#f4b63f"/>
<circle cx="5" cy="18" r="2.2" fill="#fff"/>
<path d="M2.7 10 A9.2 9.2 0 0 1 12.7 19.5" stroke="#fff" stroke-width="2.9" fill="none"/>
<path d="M2.7 4.4 A14.8 14.8 0 0 1 18.4 19.5" stroke="#fff" stroke-width="2.9" fill="none"/>
</svg></div>
<div id="note" class="abs">Note: Values above 500 are considered Beyond the AQI. Follow<br>recommendations for the Hazardous category. Additional information<br>on reducing exposure to extremely high levels of particle pollution is<br>available <b>here</b>.</div>
<div id="tline" class="abs"></div>
<div id="tabA" class="tab abs">AQI</div>
<div class="tab abs" style="left:86px;width:110.8px">Concentration</div>
<div class="tab abs" style="left:199.2px;width:92px">Historical</div>
<div id="learn" class="abs">Learn more about how the Air Quality Index [AQI] is calculated from the EPA <u>here</u>.</div>
<div id="chart" class="abs"><svg width="534" height="214" viewBox="12 371 534 214" style="position:absolute;left:0;top:0;font-family:'DejaVu Sans','Liberation Sans',sans-serif"><path d="M62.4 534.2H539.3" stroke="#e6e6e6" stroke-width="0.8"/><path d="M62.4 511.9H539.3" stroke="#e6e6e6" stroke-width="0.8"/><path d="M62.4 489.6H539.3" stroke="#e6e6e6" stroke-width="0.8"/><path d="M62.4 467.2H539.3" stroke="#e6e6e6" stroke-width="0.8"/><path d="M62.4 444.9H539.3" stroke="#e6e6e6" stroke-width="0.8"/><path d="M62.4 422.6H539.3" stroke="#e6e6e6" stroke-width="0.8"/><rect x="66.99" y="423.7" width="10.7" height="110.5" fill="#4c0026"/><rect x="86.86" y="414.2" width="10.7" height="120.0" fill="#4c0026"/><rect x="106.73" y="431.1" width="10.7" height="103.1" fill="#4c0026"/><rect x="126.60" y="444.9" width="10.7" height="89.3" fill="#4c0026"/><rect x="146.47" y="433.1" width="10.7" height="101.1" fill="#4c0026"/><rect x="166.34" y="411.6" width="10.7" height="122.6" fill="#4c0026"/><rect x="186.21" y="411.6" width="10.7" height="122.6" fill="#4c0026"/><rect x="245.82" y="425.0" width="10.7" height="109.2" fill="#4c0026"/><rect x="265.69" y="439.7" width="10.7" height="94.5" fill="#4c0026"/><rect x="285.56" y="448.0" width="10.7" height="86.2" fill="#4c0026"/><rect x="305.44" y="456.1" width="10.7" height="78.1" fill="#4c0026"/><rect x="325.31" y="438.1" width="10.7" height="96.1" fill="#4c0026"/><rect x="345.18" y="448.0" width="10.7" height="86.2" fill="#4c0026"/><rect x="365.05" y="448.0" width="10.7" height="86.2" fill="#4c0026"/><rect x="384.92" y="416.0" width="10.7" height="118.2" fill="#4c0026"/><rect x="404.79" y="421.9" width="10.7" height="112.3" fill="#4c0026"/><rect x="424.66" y="417.5" width="10.7" height="116.7" fill="#4c0026"/><rect x="444.53" y="422.8" width="10.7" height="111.4" fill="#4c0026"/><rect x="464.40" y="437.7" width="10.7" height="96.5" fill="#4c0026"/><rect x="484.27" y="450.8" width="10.7" height="83.4" fill="#4c0026"/><rect x="504.14" y="452.8" width="10.7" height="81.4" fill="#4c0026"/><rect x="524.01" y="452.1" width="10.7" height="82.1" fill="#4c0026"/><path d="M62.4 534.2H539.3" stroke="#c0d0e0" stroke-width="0.8"/><path d="M62.40 534.2v6.6" stroke="#c0d0e0" stroke-width="0.8"/><path d="M82.27 534.2v6.6" stroke="#c0d0e0" stroke-width="0.8"/><path d="M102.14 534.2v6.6" stroke="#c0d0e0" stroke-width="0.8"/><path d="M122.01 534.2v6.6" stroke="#c0d0e0" stroke-width="0.8"/><path d="M141.88 534.2v6.6" stroke="#c0d0e0" stroke-width="0.8"/><path d="M161.75 534.2v6.6" stroke="#c0d0e0" stroke-width="0.8"/><path d="M181.62 534.2v6.6" stroke="#c0d0e0" stroke-width="0.8"/><path d="M201.50 534.2v6.6" stroke="#c0d0e0" stroke-width="0.8"/><path d="M221.37 534.2v6.6" stroke="#c0d0e0" stroke-width="0.8"/><path d="M241.24 534.2v6.6" stroke="#c0d0e0" stroke-width="0.8"/><path d="M261.11 534.2v6.6" stroke="#c0d0e0" stroke-width="0.8"/><path d="M280.98 534.2v6.6" stroke="#c0d0e0" stroke-width="0.8"/><path d="M300.85 534.2v6.6" stroke="#c0d0e0" stroke-width="0.8"/><path d="M320.72 534.2v6.6" stroke="#c0d0e0" stroke-width="0.8"/><path d="M340.59 534.2v6.6" stroke="#c0d0e0" stroke-width="0.8"/><path d="M360.46 534.2v6.6" stroke="#c0d0e0" stroke-width="0.8"/><path d="M380.33 534.2v6.6" stroke="#c0d0e0" stroke-width="0.8"/><path d="M400.20 534.2v6.6" stroke="#c0d0e0" stroke-width="0.8"/><path d="M420.07 534.2v6.6" stroke="#c0d0e0" stroke-width="0.8"/><path d="M439.95 534.2v6.6" stroke="#c0d0e0" stroke-width="0.8"/><path d="M459.82 534.2v6.6" stroke="#c0d0e0" stroke-width="0.8"/><path d="M479.69 534.2v6.6" stroke="#c0d0e0" stroke-width="0.8"/><path d="M499.56 534.2v6.6" stroke="#c0d0e0" stroke-width="0.8"/><path d="M519.43 534.2v6.6" stroke="#c0d0e0" stroke-width="0.8"/><path d="M539.30 534.2v6.6" stroke="#c0d0e0" stroke-width="0.8"/><text x="52.2" y="536.3" text-anchor="end" font-size="7" fill="#000">0</text><text x="52.2" y="514.0" text-anchor="end" font-size="7" fill="#000">100</text><text x="52.2" y="491.7" text-anchor="end" font-size="7" fill="#000">200</text><text x="52.2" y="469.3" text-anchor="end" font-size="7" fill="#000">300</text><text x="52.2" y="447.0" text-anchor="end" font-size="7" fill="#000">400</text><text x="52.2" y="424.7" text-anchor="end" font-size="7" fill="#000">500</text><text transform="translate(31.4 470) rotate(-90)" text-anchor="middle" font-size="7.6" fill="#111">AQI</text><text transform="translate(74.64 545.2) rotate(-45)" text-anchor="end" font-size="7" fill="#666">8 PM</text><text transform="translate(94.51 545.2) rotate(-45)" text-anchor="end" font-size="7" fill="#666">9 PM</text><text transform="translate(114.38 545.2) rotate(-45)" text-anchor="end" font-size="7" fill="#666">10 PM</text><text transform="translate(134.25 545.2) rotate(-45)" text-anchor="end" font-size="7" fill="#666">11 PM</text><text transform="translate(154.12 545.2) rotate(-45)" text-anchor="end" font-size="7" fill="#666">Jan 27, 2021 12 AM</text><text transform="translate(173.99 545.2) rotate(-45)" text-anchor="end" font-size="7" fill="#666">1 AM</text><text transform="translate(193.86 545.2) rotate(-45)" text-anchor="end" font-size="7" fill="#666">2 AM</text><text transform="translate(213.73 545.2) rotate(-45)" text-anchor="end" font-size="7" fill="#666">3 AM</text><text transform="translate(233.60 545.2) rotate(-45)" text-anchor="end" font-size="7" fill="#666">4 AM</text><text transform="translate(253.47 545.2) rotate(-45)" text-anchor="end" font-size="7" fill="#666">5 AM</text><text transform="translate(273.34 545.2) rotate(-45)" text-anchor="end" font-size="7" fill="#666">6 AM</text><text transform="translate(293.21 545.2) rotate(-45)" text-anchor="end" font-size="7" fill="#666">7 AM</text><text transform="translate(313.09 545.2) rotate(-45)" text-anchor="end" font-size="7" fill="#666">8 AM</text><text transform="translate(332.96 545.2) rotate(-45)" text-anchor="end" font-size="7" fill="#666">9 AM</text><text transform="translate(352.83 545.2) rotate(-45)" text-anchor="end" font-size="7" fill="#666">10 AM</text><text transform="translate(372.70 545.2) rotate(-45)" text-anchor="end" font-size="7" fill="#666">11 AM</text><text transform="translate(392.57 545.2) rotate(-45)" text-anchor="end" font-size="7" fill="#666">12 PM</text><text transform="translate(412.44 545.2) rotate(-45)" text-anchor="end" font-size="7" fill="#666">1 PM</text><text transform="translate(432.31 545.2) rotate(-45)" text-anchor="end" font-size="7" fill="#666">2 PM</text><text transform="translate(452.18 545.2) rotate(-45)" text-anchor="end" font-size="7" fill="#666">3 PM</text><text transform="translate(472.05 545.2) rotate(-45)" text-anchor="end" font-size="7" fill="#666">4 PM</text><text transform="translate(491.92 545.2) rotate(-45)" text-anchor="end" font-size="7" fill="#666">5 PM</text><text transform="translate(511.79 545.2) rotate(-45)" text-anchor="end" font-size="7" fill="#666">6 PM</text><text transform="translate(531.66 545.2) rotate(-45)" text-anchor="end" font-size="7" fill="#666">7 PM</text><text x="279.4" y="386.9" text-anchor="middle" font-size="12" letter-spacing="-0.18" fill="#333">Bishkek – PM2.5</text></svg></div>
<div id="cc" class="abs">
<div class="h"><div style="top:5.5px;font-size:10px;line-height:12px">Current Conditions</div><div style="top:20.8px;font-size:8px;line-height:10px">observed at</div><div style="top:33.3px;font-size:10px;line-height:12px">Jan 27, 2021 7:00 PM (LT)</div></div>
<div class="m"><div style="top:11.5px">368 AQI</div><div style="top:30.5px">Hazardous</div><div style="top:49.5px">PM2.5</div></div>
<div class="hm">Health Message</div>
<div class="tx">AQI values over 300 trigger health warnings<br>of emergency conditions. The entire<br>population is even more likely to be affected<br>by serious health effects.</div>
</div>
</body></html>
